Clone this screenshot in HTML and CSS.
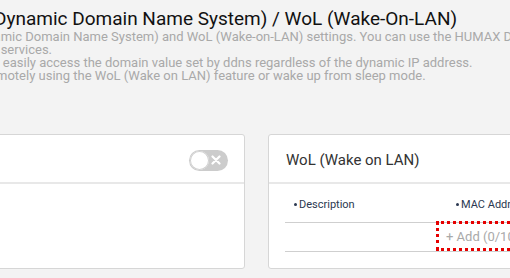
FILE: index.html
```html
<!DOCTYPE html>
<html lang="en">
<head>
    <meta charset="UTF-8">
    <meta name="viewport" content="width=device-width, initial-scale=1.0">
    <title>DDNS / WoL</title>
    <link rel="stylesheet" href="styles.css">
</head>
<body>
    <div class="page">
        <h1 class="page-title">DDNS (Dynamic Domain Name System) / WoL (Wake-On-LAN)</h1>
        <div class="intro">
            <p>DDNS (Dynamic Domain Name System) and WoL (Wake-on-LAN) settings. You can use the HUMAX DDNS and</p>
            <p>other DDNS services.</p>
            <p>So, they can easily access the domain value set by ddns regardless of the dynamic IP address.</p>
            <p>Wake PC remotely using the WoL (Wake on LAN) feature or wake up from sleep mode.</p>
        </div>

        <div class="cards">
            <div class="card">
                <div class="card-header">
                    <span class="card-title">DDNS</span>
                    <span class="toggle">
                        <span class="knob"></span>
                        <svg class="toggle-x" width="10" height="10" viewBox="0 0 10 10">
                            <path d="M1.5 1.5 L8.5 8.5 M8.5 1.5 L1.5 8.5" stroke="#fff" stroke-width="2.2" stroke-linecap="round"/>
                        </svg>
                    </span>
                </div>
                <div class="card-body short"></div>
            </div>

            <div class="card">
                <div class="card-header">
                    <span class="card-title">WoL (Wake on LAN)</span>
                </div>
                <div class="card-body">
                    <div class="table-head">
                        <div class="col-desc"><span class="dot"></span>Description</div>
                        <div class="col-mac"><span class="dot"></span>MAC Address</div>
                    </div>
                    <div class="add-row">
                        <div class="add-spacer"></div>
                        <button class="add-btn">+ Add (0/10)</button>
                    </div>
                </div>
            </div>
        </div>
    </div>
</body>
</html>
```

FILE: styles.css
```css
body {
    margin: 0;
    background-color: #f3f3f3;
    font-family: Roboto, "Liberation Sans", sans-serif;
    overflow: hidden;
}
.page {
    margin-left: -78px;
    padding-top: 7px;
}
.page-title {
    margin: 0;
    padding-left: 11px;
    font-size: 19px;
    font-weight: 400;
    line-height: 23px;
    color: #111;
    white-space: nowrap;
}
.intro {
    padding-left: 8px;
}
.intro p {
    margin: 0;
    font-size: 13px;
    line-height: 13px;
    color: #a9a9a9;
    white-space: nowrap;
}
.cards {
    display: flex;
    gap: 23px;
    margin-top: 52px;
}
.card {
    flex: 0 0 321px;
    background-color: #fff;
    border: 1px solid #d6d6d6;
    border-radius: 3px;
}
.card-header {
    height: 47px;
    display: flex;
    align-items: center;
    justify-content: space-between;
    padding: 0 16px 0 17px;
    border-bottom: 2px solid #e8e8e8;
}
.card-title {
    font-size: 15px;
    padding-top: 2px;
    color: #333;
    white-space: nowrap;
}
.toggle {
    position: relative;
    width: 39px;
    height: 21px;
    margin-top: 3px;
    border-radius: 11px;
    background-color: #cccccc;
}
.knob {
    position: absolute;
    left: 1px;
    top: 1px;
    width: 19px;
    height: 19px;
    border-radius: 50%;
    background-color: #fff;
    box-shadow: 0 0 0 1px #d0d0d0 inset;
}
.toggle-x {
    position: absolute;
    left: 22px;
    top: 5px;
}
.card-body {
    padding: 14px 0 16px 16px;
}
.card-body.short {
    height: 31px;
    padding: 0;
}
.table-head {
    display: flex;
    padding: 1px 0 11px;
    border-bottom: 1px solid #cfcfcf;
    font-size: 11px;
    line-height: 12px;
    color: #2b3850;
}
.col-desc {
    width: 162px;
    padding-left: 9px;
}
.col-mac {
    white-space: nowrap;
}
.dot {
    display: inline-block;
    width: 3px;
    height: 3px;
    margin: 0 2px 2px 0;
    border-radius: 50%;
    background-color: #2b3850;
    vertical-align: middle;
}
.add-row {
    display: flex;
    height: 24px;
    padding: 1px 0 3px;
    border-bottom: 1px solid #cfcfcf;
}
.add-spacer {
    width: 154px;
}
.add-btn {
    flex: 1;
    height: 24px;
    padding: 0 0 0 7px;
    border: none;
    background: none;
    text-align: left;
    font-family: inherit;
    font-size: 13px;
    color: #a9a9a9;
    outline: 3px dotted #e60000;
}
```
